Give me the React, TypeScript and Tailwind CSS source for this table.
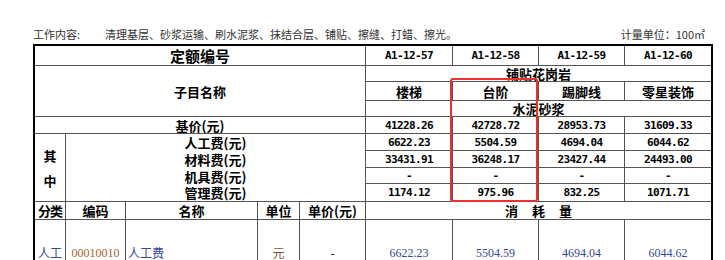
import type { ReactNode } from "react";
import clsx from "clsx";

const CJK = "font-['Noto_Sans_CJK_SC',sans-serif]";
const NUM = "font-['DejaVu_Sans_Mono','Noto_Sans_CJK_SC',monospace] text-[11px] tracking-[-0.6px] font-bold";

const codes = ["A1-12-57", "A1-12-58", "A1-12-59", "A1-12-60"];
const names = ["楼梯", "台阶", "踢脚线", "零星装饰"];

const rows: { label: string; values: string[] }[] = [
  { label: "人工费(元)", values: ["6622.23", "5504.59", "4694.04", "6044.62"] },
  { label: "材料费(元)", values: ["33431.91", "36248.17", "23427.44", "24493.00"] },
  { label: "机具费(元)", values: ["-", "-", "-", "-"] },
  { label: "管理费(元)", values: ["1174.12", "975.96", "832.25", "1071.71"] },
];

const base = ["41228.26", "42728.72", "28953.73", "31609.33"];
const labour = ["6622.23", "5504.59", "4694.04", "6044.62"];

function Cell({ className, children }: { className?: string; children?: ReactNode }) {
  return (
    <div className={clsx("flex items-center justify-center border-r border-b border-[#555] leading-none whitespace-nowrap", className)}>
      {children}
    </div>
  );
}

// last column has no right rule of its own, the table's outer border draws it
const last = (i: number) => (i === 3 ? "border-r-0" : "");

export default function App() {
  return (
    <main className="h-[260px] w-[725px] overflow-hidden bg-white text-black">
      <div className={clsx("flex items-end pt-[28px] pl-[33px] pr-[20px] text-[11px] leading-[13px] text-[#333]", CJK)}>
        <span className="w-[72px]">工作内容:</span>
        <span>清理基层、砂浆运输、刷水泥浆、抹结合层、铺贴、擦缝、打蜡、擦光。</span>
        <span className="ml-auto">计量单位：100㎡</span>
      </div>

      <div className="relative ml-[33px] mt-[3px] w-[680px]">
        <div
          className={clsx(
            "grid border-t-2 border-l-2 border-r-2 border-black text-[13px] font-bold",
            "grid-cols-[31px_60px_132px_42px_66px_87px_86px_86px_86px]",
            "grid-rows-[20px_16px_19px_16px_17px_17px_17px_16px_18px_18px_50px]",
            CJK
          )}
        >
          <Cell className="col-span-5 text-[15px]">定额编号</Cell>
          {codes.map((c, i) => (
            <Cell key={c} className={clsx(NUM, last(i))}>{c}</Cell>
          ))}

          <Cell className="col-span-5 row-span-3">子目名称</Cell>
          <Cell className="col-span-4 border-r-0">铺贴花岗岩</Cell>
          {names.map((n, i) => (
            <Cell key={n} className={last(i)}>{n}</Cell>
          ))}
          <Cell className="col-span-4 border-r-0">水泥砂浆</Cell>

          <Cell className="col-span-5">基价(元)</Cell>
          {base.map((v, i) => (
            <Cell key={v} className={clsx(NUM, last(i))}>{v}</Cell>
          ))}

          <Cell className="row-span-4 flex-col gap-[12px]">
            <span>其</span>
            <span>中</span>
          </Cell>
          {rows.map((r, ri) => (
            <div key={r.label} className="contents">
              <Cell className={clsx("col-span-4", ri < 3 && "border-b-0")}>{r.label}</Cell>
              {r.values.map((v, i) => (
                <Cell key={i} className={clsx(NUM, last(i))}>{v}</Cell>
              ))}
            </div>
          ))}

          <Cell className="text-[13px] tracking-[-1px]">分类</Cell>
          <Cell>编码</Cell>
          <Cell>名称</Cell>
          <Cell>单位</Cell>
          <Cell>单价(元)</Cell>
          <Cell className="col-span-4 gap-[14px] border-r-0">
            <span>消</span>
            <span>耗</span>
            <span>量</span>
          </Cell>

          <Cell className="items-start pt-[27px] font-normal text-[12px] leading-[12px] text-[#34499a] border-b-0">人工</Cell>
          <Cell className="items-start pt-[27px] font-normal text-[12px] leading-[12px] text-[#a9621f] font-['Liberation_Serif',serif] border-b-0">00010010</Cell>
          <Cell className="items-start justify-start pl-[2px] pt-[27px] font-normal text-[12px] leading-[12px] text-[#34499a] border-b-0">人工费</Cell>
          <Cell className="items-start pt-[27px] font-normal text-[12px] leading-[12px] text-[#7a5230] border-b-0">元</Cell>
          <Cell className="items-start pt-[27px] font-normal text-[12px] leading-[12px] border-b-0">-</Cell>
          {labour.map((v, i) => (
            <Cell
              key={v}
              className={clsx(
                "items-start pt-[27px] font-normal text-[12px] leading-[12px] text-[#34499a] font-['Liberation_Serif',serif] border-b-0",
                last(i)
              )}
            >
              {v}
            </Cell>
          ))}
        </div>

        <div className="pointer-events-none absolute left-[417px] top-[34px] h-[124px] w-[88px] rounded-[3px] border-2 border-[#e8322b]" />
      </div>
    </main>
  );
}
